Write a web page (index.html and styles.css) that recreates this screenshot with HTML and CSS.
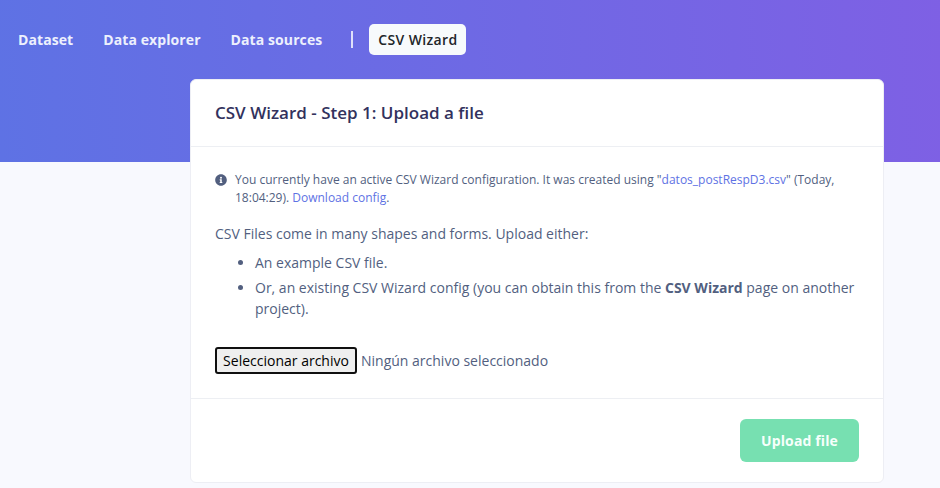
FILE: index.html
```html
<!DOCTYPE html>
<html lang="en">
<head>
<meta charset="utf-8">
<title>CSV Wizard</title>
<link rel="stylesheet" href="styles.css">
</head>
<body>
<div class="hero">
  <nav class="nav">
    <a>Dataset</a>
    <a>Data explorer</a>
    <a>Data sources</a>
    <span class="divider"></span>
    <a class="active">CSV Wizard</a>
  </nav>
</div>
<main class="card">
  <header class="card-header"><h1>CSV Wizard - Step 1: Upload a file</h1></header>
  <section class="card-body">
    <div class="notice">
      <svg class="info" viewBox="0 0 512 512"><path fill="currentColor" d="M256 8C119 8 8 119 8 256s111 248 248 248 248-111 248-248S393 8 256 8zm0 110a42 42 0 1 1 0 84 42 42 0 0 1 0-84zm56 254c0 7-5 12-12 12h-88c-7 0-12-5-12-12v-24c0-7 5-12 12-12h12v-64h-12c-7 0-12-5-12-12v-24c0-7 5-12 12-12h64c7 0 12 5 12 12v100h12c7 0 12 5 12 12v24z"/></svg>
      <p>You currently have an active CSV Wizard configuration. It was created using "<a>datos_postRespD3.csv</a>" (Today, 18:04:29). <a>Download config</a>.</p>
    </div>
    <p class="intro">CSV Files come in many shapes and forms. Upload either:</p>
    <ul>
      <li>An example CSV file.</li>
      <li>Or, an existing CSV Wizard config (you can obtain this from the <b>CSV Wizard</b> page on another project).</li>
    </ul>
    <div class="file"><button class="choose">Seleccionar archivo</button><span>Ningún archivo seleccionado</span></div>
  </section>
  <footer class="card-footer"><button class="upload">Upload file</button></footer>
</main>
</body>
</html>
```
FILE: styles.css
```css
* { box-sizing: border-box; }
body {
  margin: 0;
  height: 488px;
  overflow: hidden;
  background: #f8f9fe;
  color: #525f7f;
  font: 400 14px/21px "Open Sans", sans-serif;
}
a { color: #5e72e4; }
.hero {
  height: 162px;
  padding: 24px 18px;
  background: linear-gradient(87deg, #5e72e4 0, #825ee4 1060px);
}
.nav { display: flex; align-items: center; height: 31px; letter-spacing: .09px; }
.nav a { margin-right: 30px; color: #edf0fd; font-weight: 700; white-space: nowrap; }
.divider { width: 2px; height: 17px; margin: 0 16px 0 -1px; background: #dfe0fa; }
.nav .active {
  width: 97px;
  margin: 0;
  padding: 5px 9px;
  border-radius: 5px;
  background: #f7fafc;
  color: #212529;
  font-weight: 600;
  letter-spacing: .025em;
}
.card {
  width: 694px;
  height: 404px;
  margin: -83px 0 0 190px;
  border: 1px solid #edeef4;
  border-radius: 6px;
  background: #fff;
}
.card-header { height: 67px; padding: 20px 24px; border-bottom: 1px solid #edeff3; }
h1 { margin: 0; color: #32325d; font-size: 17px; font-weight: 600; line-height: 26px; }
.card-body { height: 251px; padding: 24px 24px 0; }
.notice { display: flex; gap: 8px; font-size: 12px; line-height: 18px; }
.notice p { margin: 0; }
.info { flex: none; width: 12px; height: 12px; margin-top: 3px; }
.intro { margin: 16px 0 8px; }
ul { margin: 0; padding-left: 40px; }
li { margin-bottom: 4px; }
.file { display: flex; align-items: center; gap: 4px; margin-top: 28px; }
button { font-family: inherit; white-space: nowrap; }
.choose {
  width: 142px;
  height: 27px;
  padding: 0;
  border: 2px solid #101010;
  border-radius: 3px;
  background: #efefef;
  color: #000;
  font-size: 14px;
}
.card-footer {
  display: flex;
  justify-content: flex-end;
  padding: 20px 24px;
  border-top: 1px solid #edeff3;
}
.upload {
  width: 119px;
  height: 43px;
  border: 0;
  border-radius: 6px;
  background: #77e0b1;
  color: #f6fffb;
  font-size: 14px;
  font-weight: 700;
  letter-spacing: .12px;
}
```
